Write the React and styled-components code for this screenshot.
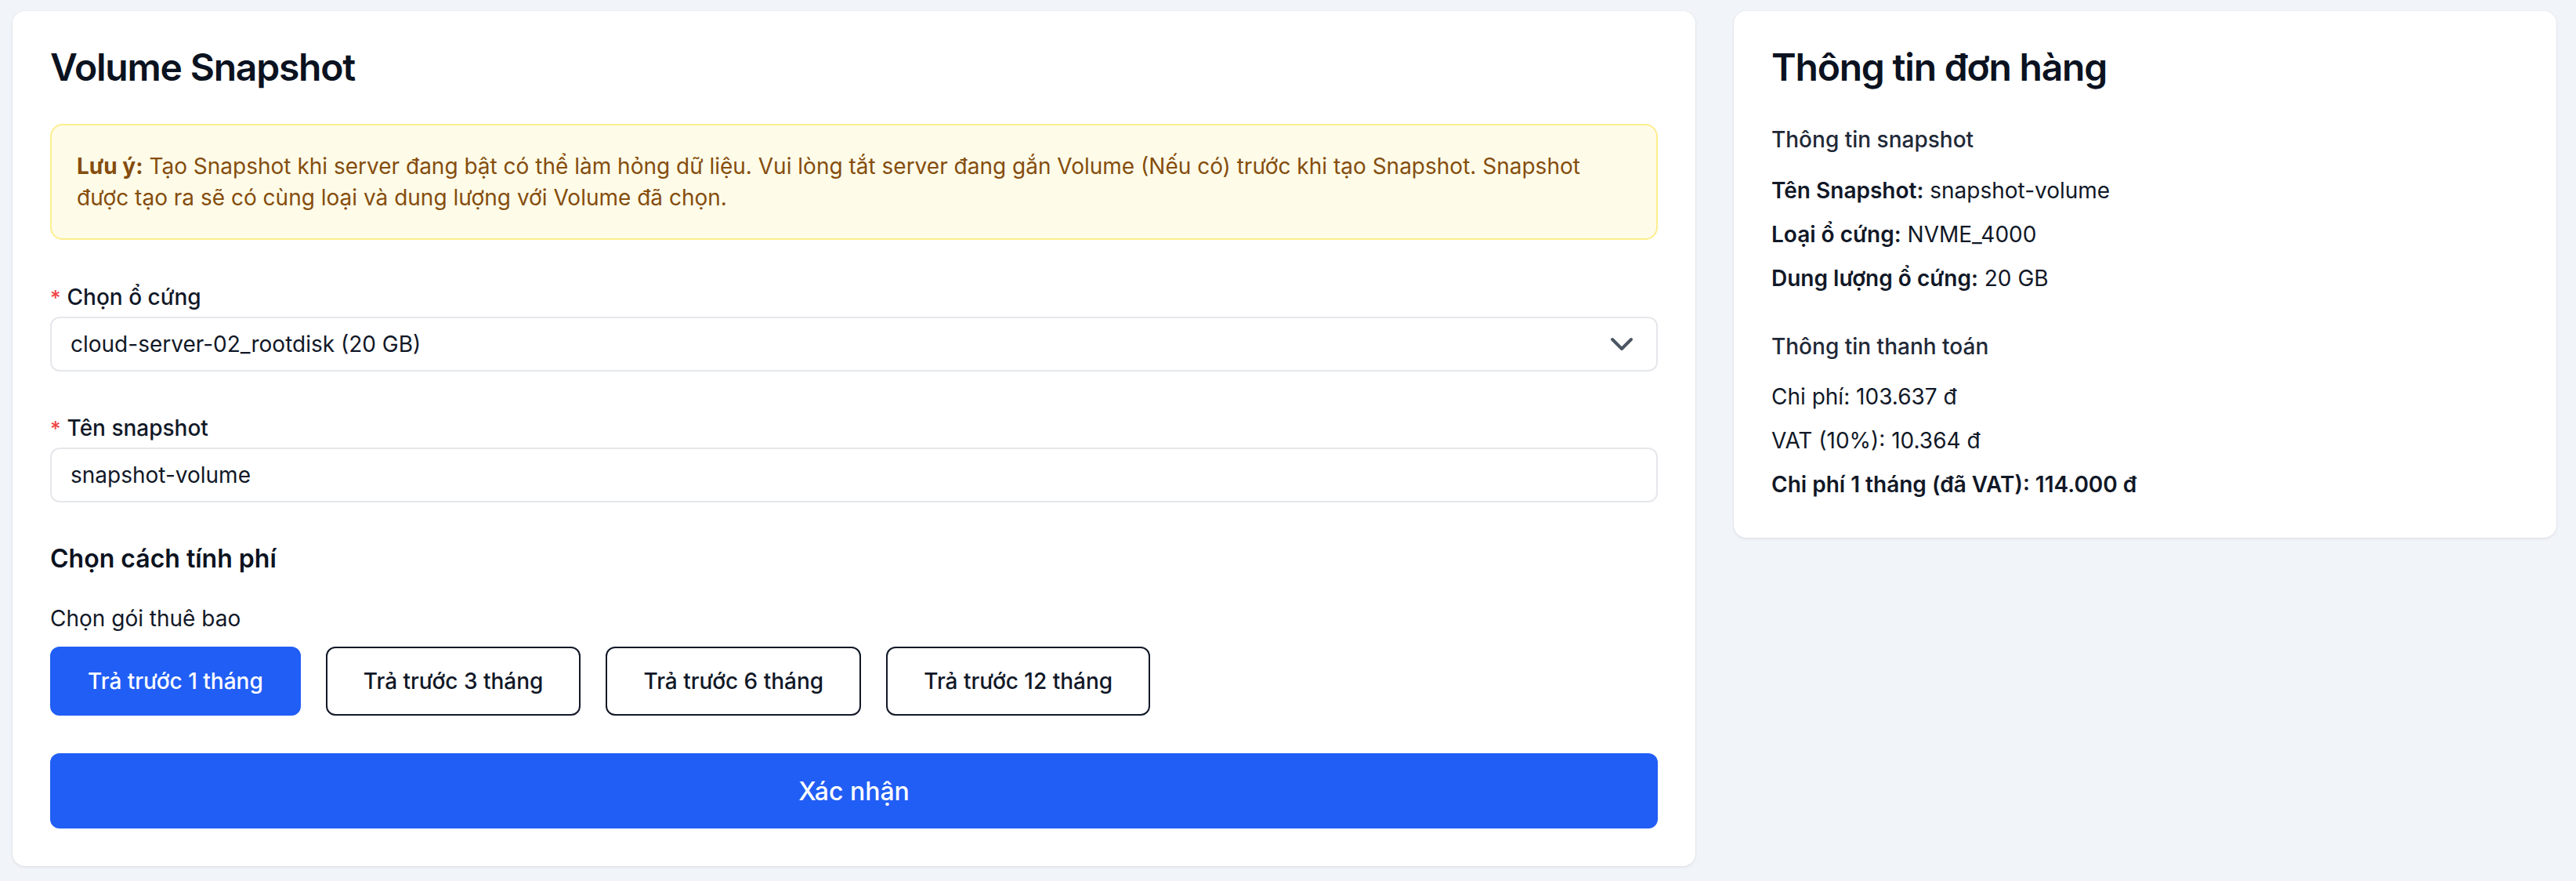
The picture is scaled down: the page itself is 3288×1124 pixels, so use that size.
import React from "react"
import styled, { createGlobalStyle } from "styled-components"
import { ChevronDown } from "lucide-react"

const GlobalStyle = createGlobalStyle`
  html, body {
    margin: 0;
    padding: 0;
    background: #f1f4f9;
  }
  body {
    font-family: Inter, "Noto Sans", "Liberation Sans", sans-serif;
    color: #111827;
  }
  * {
    box-sizing: border-box;
  }
`

const plans = ["Trả trước 1 tháng", "Trả trước 3 tháng", "Trả trước 6 tháng", "Trả trước 12 tháng"]

const snapshotInfo = [
  { label: "Tên Snapshot:", value: "snapshot-volume" },
  { label: "Loại ổ cứng:", value: "NVME_4000" },
  { label: "Dung lượng ổ cứng:", value: "20 GB" },
]

const App = () => (
  <>
    <GlobalStyle />
    <Page>
      <Layout>
        <Card>
          <Title>Volume Snapshot</Title>
          <Alert>
            <strong>Lưu ý:</strong> Tạo Snapshot khi server đang bật có thể làm hỏng dữ liệu. Vui lòng tắt server
            đang gắn Volume (Nếu có) trước khi tạo Snapshot. Snapshot được tạo ra sẽ có cùng loại và dung lượng với
            Volume đã chọn.
          </Alert>

          <Field>
            <Label>
              <Required>*</Required>Chọn ổ cứng
            </Label>
            <SelectBox>
              <span>cloud-server-02_rootdisk (20 GB)</span>
              <ChevronDown size={48} strokeWidth={2} color="#4b5563" />
            </SelectBox>
          </Field>

          <Field $last>
            <Label>
              <Required>*</Required>Tên snapshot
            </Label>
            <TextInput defaultValue="snapshot-volume" />
          </Field>

          <SectionTitle>Chọn cách tính phí</SectionTitle>
          <SubLabel>Chọn gói thuê bao</SubLabel>
          <PlanRow>
            {plans.map((p, i) => (
              <PlanButton key={p} $active={i === 0}>
                {p}
              </PlanButton>
            ))}
          </PlanRow>

          <SubmitButton>Xác nhận</SubmitButton>
        </Card>

        <Card>
          <Title>Thông tin đơn hàng</Title>
          <InfoHeading>Thông tin snapshot</InfoHeading>
          <InfoList>
            {snapshotInfo.map(row => (
              <InfoRow key={row.label}>
                <b>{row.label}</b> {row.value}
              </InfoRow>
            ))}
          </InfoList>

          <InfoHeading $spaced>Thông tin thanh toán</InfoHeading>
          <InfoList>
            <InfoRow>Chi phí: 103.637 đ</InfoRow>
            <InfoRow>VAT (10%): 10.364 đ</InfoRow>
            <InfoRow $strong>Chi phí 1 tháng (đã VAT): 114.000 đ</InfoRow>
          </InfoList>
        </Card>
      </Layout>
    </Page>
  </>
)

export default App

const Page = styled.div`
  padding: 14px 25px 19px 16px;
`

const Layout = styled.div`
  display: grid;
  grid-template-columns: 1fr 1050px;
  gap: 49px;
  align-items: start;
`

const Card = styled.section`
  background: #ffffff;
  border-radius: 16px;
  padding: 42px 48px 48px;
  box-shadow: 0 2px 4px rgba(15, 23, 42, 0.06), 0 0 0 1px rgba(15, 23, 42, 0.03);
`

const Title = styled.h1`
  margin: 0 0 42px;
  font-size: 48px;
  line-height: 60px;
  font-weight: 600;
  letter-spacing: -1.2px;
  color: #0b1220;
`

const Alert = styled.div`
  margin-bottom: 53px;
  padding: 32px;
  border: 2px solid #fdee8f;
  border-radius: 16px;
  background: #fefce8;
  color: #854d0e;
  font-size: 28px;
  line-height: 40px;

  strong {
    font-weight: 700;
  }
`

const Field = styled.div`
  margin-bottom: ${props => (props.$last ? "48px" : "52px")};
`

const Label = styled.label`
  display: block;
  margin-bottom: 4px;
  font-size: 28px;
  line-height: 40px;
  font-weight: 500;
  color: #111827;
`

const Required = styled.span`
  color: #ef4444;
  margin-right: 8px;
  font-size: 26px;
`

const SelectBox = styled.div`
  display: flex;
  align-items: center;
  justify-content: space-between;
  height: 70px;
  padding: 0 20px 0 24px;
  border: 2px solid #e5e7eb;
  border-radius: 12px;
  font-size: 28px;
  color: #111827;
`

const TextInput = styled.input`
  display: block;
  width: 100%;
  height: 70px;
  padding: 0 24px;
  border: 2px solid #e5e7eb;
  border-radius: 12px;
  font-family: inherit;
  font-size: 28px;
  color: #111827;
  outline: none;
`

const SectionTitle = styled.h2`
  margin: 0 0 32px;
  font-size: 32px;
  line-height: 48px;
  font-weight: 600;
  color: #0b1220;
`

const SubLabel = styled.div`
  margin-bottom: 16px;
  font-size: 28px;
  line-height: 40px;
  color: #111827;
`

const PlanRow = styled.div`
  display: flex;
  gap: 32px;
  margin-bottom: 48px;
`

const PlanButton = styled.button`
  height: 88px;
  padding: 0 46px;
  border-radius: 12px;
  border: 2px solid ${props => (props.$active ? "#215ef5" : "#111827")};
  background: ${props => (props.$active ? "#215ef5" : "#ffffff")};
  color: ${props => (props.$active ? "#ffffff" : "#111827")};
  font-family: inherit;
  font-size: 28px;
  font-weight: 500;
  cursor: pointer;
`

const SubmitButton = styled.button`
  display: block;
  width: 100%;
  height: 96px;
  border: none;
  border-radius: 12px;
  background: #215ef5;
  color: #ffffff;
  font-family: inherit;
  font-size: 32px;
  font-weight: 500;
  cursor: pointer;
`

const InfoHeading = styled.div`
  margin: ${props => (props.$spaced ? "47px 0 24px" : "0 0 25px")};
  font-size: 28px;
  line-height: 40px;
  font-weight: 500;
  color: #1f2937;
`

const InfoList = styled.div`
  display: flex;
  flex-direction: column;
  gap: 16px;
`

const InfoRow = styled.div`
  font-size: 28px;
  line-height: 40px;
  font-weight: ${props => (props.$strong ? 600 : 400)};
  color: #111827;

  b {
    font-weight: 600;
  }
`
